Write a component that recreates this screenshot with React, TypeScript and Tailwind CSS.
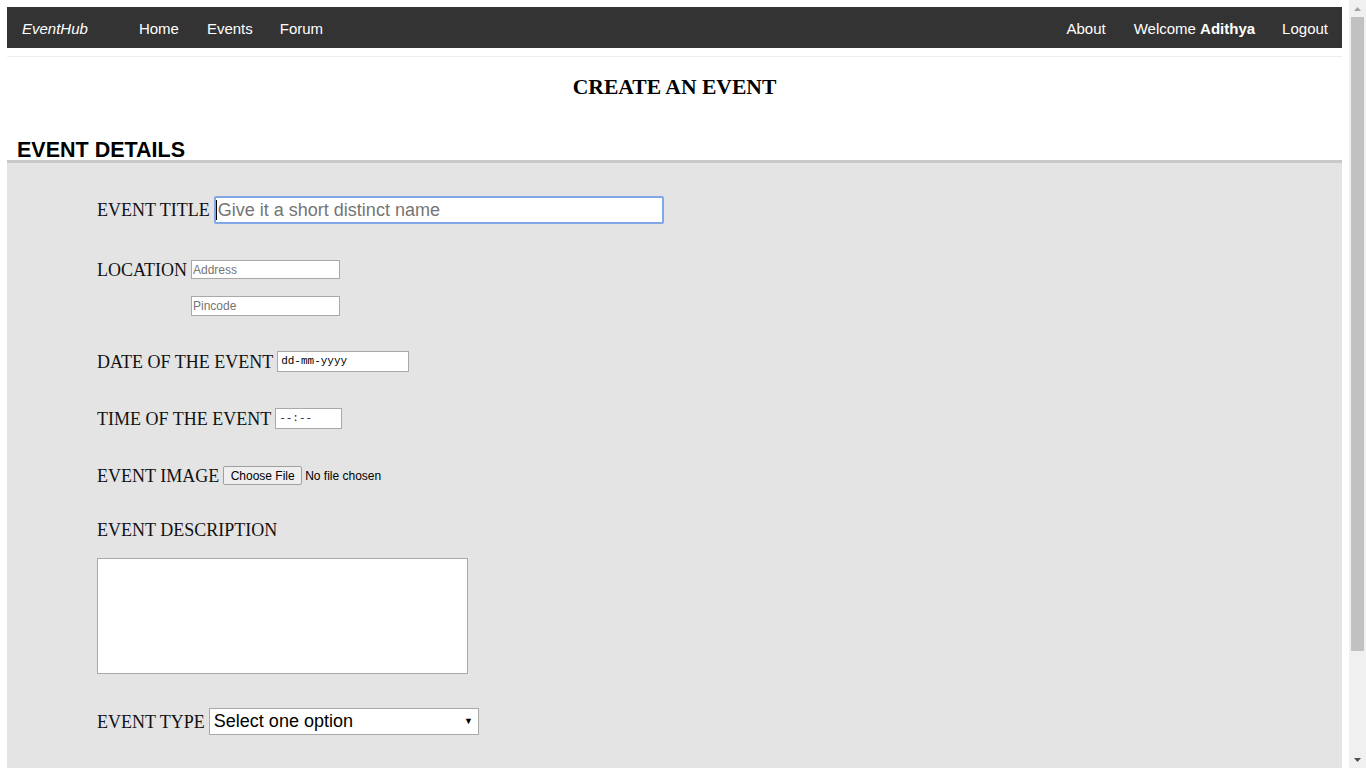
import React from "react";

const serif = "font-['Liberation_Serif','Times_New_Roman',serif]";
const sans = "font-['Liberation_Sans',Arial,sans-serif]";
const mono = "font-['Liberation_Mono','Courier_New',monospace]";

function NavBar() {
  return (
    <nav className={`flex h-[41px] items-center bg-[#333333] pt-[3px] text-[15px] text-white ${sans}`}>
      <span className="ml-[15px] mr-[37px] italic">EventHub</span>
      <a className="px-[14px]">Home</a>
      <a className="px-[14px]">Events</a>
      <a className="px-[13px]">Forum</a>
      <div className="ml-auto flex">
        <a className="px-[14px]">About</a>
        <a className="pl-[14px] pr-[13px]">
          Welcome <b>Adithya</b>
        </a>
        <a className="pl-[14px] pr-[14px]">Logout</a>
      </div>
    </nav>
  );
}

function Label({ children }: { children: React.ReactNode }) {
  return <span className={`mr-[4px] text-[18px] leading-none text-[#111] ${serif}`}>{children}</span>;
}

function Scrollbar() {
  return (
    <div className="flex w-[17px] shrink-0 flex-col items-center bg-[#f0f0f0]">
      <div className="flex h-[17px] w-full items-center justify-center">
        <svg width="7" height="4" viewBox="0 0 7 4">
          <path d="M0 4 L3.5 0 L7 4 Z" fill="#a3a3a3" />
        </svg>
      </div>
      <div className="h-[634px] w-[13px] bg-[#c1c1c1]" />
      <div className="flex-1" />
      <div className="flex h-[17px] w-full items-center justify-center">
        <svg width="7" height="4" viewBox="0 0 7 4">
          <path d="M0 0 L7 0 L3.5 4 Z" fill="#505050" />
        </svg>
      </div>
    </div>
  );
}

export default function App() {
  return (
    <div className="flex h-[768px] overflow-hidden bg-white">
      <div className="min-w-0 flex-1 px-[7px] pt-[7px]">
        <NavBar />
        <hr className="mt-[8px] border-t border-[#eeeeee]" />

        <h3 className={`mt-[18px] text-center text-[21.6px] font-bold leading-[25px] text-black ${serif}`}>CREATE AN EVENT</h3>

        <h2 className={`mt-[40px] pl-[10px] text-[21.5px] font-bold leading-[20px] text-black ${sans}`}>EVENT DETAILS</h2>

        <div className="h-[719px] border-t-[3px] border-[#c8c8c8] bg-[#e4e4e4] pl-[90px] pt-[33px]">
          {/* title */}
          <div className="flex h-[28px] items-center">
            <Label>EVENT TITLE</Label>
            <div
              className={`flex h-[28px] w-[450px] items-center rounded-[2px] border-2 border-[#80a8e8] bg-white text-[18px] text-[#757575] ${sans}`}
            >
              <span className="mr-[1px] h-[20px] w-px bg-black" />
              Give it a short distinct name
            </div>
          </div>

          {/* location */}
          <div className="mt-[36px] flex h-[19px] items-center">
            <Label>LOCATION</Label>
            <input
              placeholder="Address"
              className={`h-[19px] w-[149px] border border-[#a9a9a9] bg-white px-[1px] text-[12px] outline-none placeholder:text-[#757575] ${sans}`}
            />
          </div>
          <div className="mt-[17px] pl-[94px]">
            <input
              placeholder="Pincode"
              className={`block h-[20px] w-[149px] border border-[#a9a9a9] bg-white px-[1px] text-[12px] outline-none placeholder:text-[#757575] ${sans}`}
            />
          </div>

          {/* date */}
          <div className="mt-[35px] flex h-[21px] items-center">
            <Label>DATE OF THE EVENT</Label>
            <div className={`flex h-[21px] w-[132px] items-center border border-[#a9a9a9] bg-white pl-[3px] text-[11px] text-black ${mono}`}>
              dd-mm-yyyy
            </div>
          </div>

          {/* time */}
          <div className="mt-[36px] flex h-[21px] items-center">
            <Label>TIME OF THE EVENT</Label>
            <div className={`flex h-[21px] w-[67px] items-center border border-[#a9a9a9] bg-white pl-[3px] text-[11px] text-[#1a1a60] ${mono}`}>
              --:--
            </div>
          </div>

          {/* image */}
          <div className="mt-[37px] flex h-[19px] items-center">
            <Label>EVENT IMAGE</Label>
            <span className={`flex h-[19px] w-[79px] items-center justify-center rounded-[2px] border border-[#a0a0a0] bg-[#efefef] text-[12px] text-black ${sans}`}>
              Choose File
            </span>
            <span className={`ml-[3px] text-[12px] text-black ${sans}`}>No file chosen</span>
          </div>

          {/* description */}
          <div className="mt-[36px] flex h-[18px] items-center">
            <Label>EVENT DESCRIPTION</Label>
          </div>
          <textarea className="mt-[19px] block h-[116px] w-[371px] resize-none border border-[#a9a9a9] bg-white outline-none" />

          {/* type */}
          <div className="mt-[34px] flex h-[27px] items-center">
            <Label>EVENT TYPE</Label>
            <div
              className={`flex h-[27px] w-[270px] items-center justify-between border border-[#a9a9a9] bg-white pl-[4px] pr-[5px] text-[18px] text-black ${sans}`}
            >
              <span>Select one option</span>
              <span className="text-[9px]">▼</span>
            </div>
          </div>
        </div>
      </div>
      <Scrollbar />
    </div>
  );
}
